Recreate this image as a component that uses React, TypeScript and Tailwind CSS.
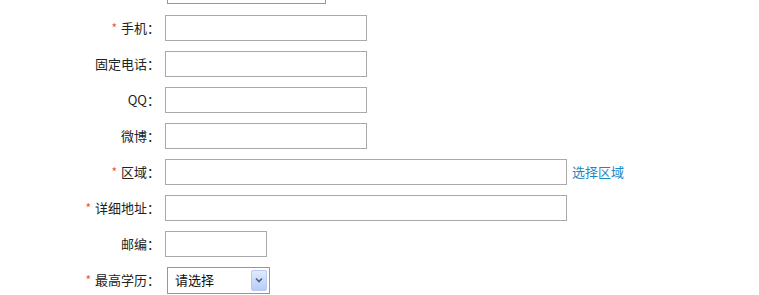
import { ReactNode } from 'react';

const font = { fontFamily: '"Noto Sans CJK SC", "SimSun", sans-serif' };

function Row({ label, required, children }: { label: string; required?: boolean; children: ReactNode }) {
  return (
    <div className="flex items-center h-[26px]">
      <div className="w-[165px] pr-[5px] text-right text-[13px] text-[#222] whitespace-nowrap">
        {required && <span className="text-[#f05050] mr-[4px] text-[12px]">*</span>}
        {label}
      </div>
      {children}
    </div>
  );
}

function Input({ w }: { w: string }) {
  return <div className={`h-[26px] border border-[#a9a9a9] bg-white ${w}`} />;
}

export default function App() {
  return (
    <div className="w-[759px] h-[295px] bg-white overflow-hidden" style={font}>
      <div className="flex flex-col gap-[10px]">
        <div className="flex h-[5px]">
          <div className="w-[167px]" />
          <div className="w-[159px] h-[4px] border-x border-b border-[#7f9db9]" />
        </div>
        <Row label="手机：" required>
          <Input w="w-[202px]" />
        </Row>
        <Row label="固定电话：">
          <Input w="w-[202px]" />
        </Row>
        <Row label="QQ：">
          <Input w="w-[202px]" />
        </Row>
        <Row label="微博：">
          <Input w="w-[202px]" />
        </Row>
        <Row label="区域：" required>
          <Input w="w-[402px]" />
          <a className="ml-[5px] text-[13px] text-[#1b87c4] cursor-pointer">选择区域</a>
        </Row>
        <Row label="详细地址：" required>
          <Input w="w-[402px]" />
        </Row>
        <Row label="邮编：">
          <Input w="w-[102px]" />
        </Row>
        <div className="flex items-center h-[26px]">
          <div className="w-[167px] pr-[7px] text-right text-[13px] text-[#222] whitespace-nowrap">
            <span className="text-[#f05050] mr-[4px] text-[12px]">*</span>最高学历：
          </div>
          <div className="w-[103px] h-[27px] border border-[#7f9db9] bg-white flex items-center justify-between pl-[7px] pr-[2px]">
            <span className="text-[13px] text-[#111]">请选择</span>
            <div className="w-[16px] h-[21px] rounded-[2px] border border-[#b9c9ef] bg-gradient-to-b from-[#e1eafe] to-[#b7ccf6] flex items-center justify-center">
              <svg width="8" height="6" viewBox="0 0 8 6">
                <path d="M1 1.5 L4 4.5 L7 1.5" fill="none" stroke="#4d6185" strokeWidth="1.6" />
              </svg>
            </div>
          </div>
        </div>
      </div>
    </div>
  );
}
